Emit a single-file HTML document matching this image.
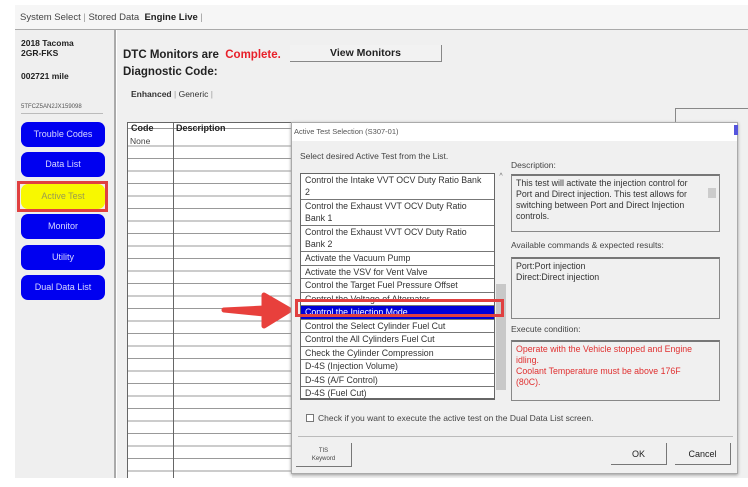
<!DOCTYPE html>
<html><head><meta charset="utf-8"><style>
*{box-sizing:border-box;margin:0;padding:0}
body{width:748px;height:487px;background:#fff;font-family:"Liberation Sans",sans-serif;position:relative;overflow:hidden;color:#222}
.a{position:absolute}
.btn{position:absolute;left:21px;width:84px;height:25px;background:#0000f0;border-radius:7px;color:#d8d8ff;font-size:9px;text-align:center;line-height:25px}
.list div{height:13.5px;border-bottom:1px solid #777;font-size:8.8px;line-height:12.5px;padding-left:4px;white-space:nowrap;color:#333;overflow:hidden}
.list div.t{height:26px;line-height:12px}
.box{position:absolute;border:1px solid #888;border-top:2px solid #777;background:#f0f0f0;font-size:8.8px;line-height:11px;padding:2px 18px 2px 4px}
</style></head><body>
<div class="a" style="left:15px;top:5px;width:733px;height:25px;border-bottom:1px solid #aaa;background:#f6f6f6"></div>
<div class="a" style="left:20px;top:12px;font-size:9.5px;color:#444">System Select <span style="color:#999">|</span> Stored Data&nbsp;&nbsp;<b style="color:#222">Engine Live</b> <span style="color:#999">|</span></div>
<div class="a" style="left:15px;top:30px;width:101px;height:448px;background:#efefef;border-right:2px solid #aaa"></div>
<div class="a" style="left:21px;top:38px;font-size:8.5px;font-weight:bold;line-height:10px">2018 Tacoma<br>2GR-FKS</div>
<div class="a" style="left:21px;top:71px;font-size:8.5px;font-weight:bold">002721 mile</div>
<div class="a" style="left:21px;top:104px;font-size:6px;color:#555;width:82px;border-bottom:1px solid #bbb;padding-bottom:3px">5TFCZ5AN2JX159098</div>
<div class="btn" style="top:122px">Trouble Codes</div>
<div class="btn" style="top:152px">Data List</div>
<div class="a" style="left:17px;top:181px;width:91px;height:31px;border:3px solid #e04040"></div>
<div class="btn" style="top:184px;background:#f8f800;color:#9a9a50">Active Test</div>
<div class="btn" style="top:214px">Monitor</div>
<div class="btn" style="top:245px">Utility</div>
<div class="btn" style="top:275px">Dual Data List</div>
<div class="a" style="left:117px;top:30px;width:631px;height:448px;background:#f0f0f0"></div>
<div class="a" style="left:123px;top:49px;font-size:11.5px;font-weight:bold">DTC Monitors are&nbsp; <span style="color:#e8202a">Complete.</span></div>
<div class="a" style="left:123px;top:66px;font-size:11.5px;font-weight:bold">Diagnostic Code:</div>
<div class="a" style="left:290px;top:45px;width:152px;height:17px;background:#f2f2f2;border-right:1px solid #888;border-bottom:1px solid #888;font-size:10.5px;font-weight:bold;text-align:center;line-height:16px">View Monitors</div>
<div class="a" style="left:131px;top:89px;font-size:8.5px;color:#333"><b>Enhanced</b> <span style="color:#999">|</span> Generic <span style="color:#999">|</span></div>
<div class="a" style="left:675px;top:108px;width:73px;height:16px;border-left:1px solid #888;border-top:1px solid #888"></div>
<div class="a" style="left:127px;top:122px;width:165px;height:356px;background:#fff;border-left:1px solid #666;border-top:1px solid #666;background-image:repeating-linear-gradient(to bottom,transparent 0 11.5px,#999 11.5px 12.5px);background-position:0 11px"></div>
<div class="a" style="left:173px;top:122px;width:1px;height:356px;background:#666"></div>
<div class="a" style="left:131px;top:123px;font-size:9px;font-weight:bold">Code</div>
<div class="a" style="left:176px;top:123px;font-size:9px;font-weight:bold">Description</div>
<div class="a" style="left:130px;top:136px;font-size:8.5px;color:#444">None</div>
<svg class="a" style="left:218px;top:290px" width="76" height="40"><path d="M6 20 L46 18 L46 5 L72 20 L46 36 L46 24 Z" fill="#e8403c" stroke="#e8403c" stroke-width="5" stroke-linejoin="round"/></svg>
<div class="a" style="left:291px;top:122px;width:447px;height:352px;background:#f0f0f0;border:1px solid #aaa;box-shadow:0 1px 3px #999"></div>
<div class="a" style="left:292px;top:123px;width:445px;height:18px;background:#fff;font-size:7.5px;color:#555;line-height:18px;padding-left:2px">Active Test Selection (S307-01)</div>
<div class="a" style="left:734px;top:125px;width:4px;height:10px;background:#5555dd"></div>
<div class="a" style="left:300px;top:151px;font-size:8.5px;color:#444">Select desired Active Test from the List.</div>
<div class="a list" style="left:300px;top:173px;width:195px;height:227px;background:#fff;border:1px solid #666;border-bottom:2px solid #666;overflow:hidden">
<div class="t">Control the Intake VVT OCV Duty Ratio Bank<br>2</div>
<div class="t">Control the Exhaust VVT OCV Duty Ratio<br>Bank 1</div>
<div class="t">Control the Exhaust VVT OCV Duty Ratio<br>Bank 2</div>
<div>Activate the Vacuum Pump</div>
<div>Activate the VSV for Vent Valve</div>
<div>Control the Target Fuel Pressure Offset</div>
<div>Control the Voltage of Alternator</div>
<div style="background:#0000d8;color:#fff">Control the Injection Mode</div>
<div>Control the Select Cylinder Fuel Cut</div>
<div>Control the All Cylinders Fuel Cut</div>
<div>Check the Cylinder Compression</div>
<div>D-4S (Injection Volume)</div>
<div>D-4S (A/F Control)</div>
<div style="border:0">D-4S (Fuel Cut)</div>
</div>
<div class="a" style="left:495px;top:173px;width:12px;height:227px;background:#f0f0f0;font-size:7px;color:#666;text-align:center">^</div>
<div class="a" style="left:496px;top:284px;width:10px;height:106px;background:#c8c8c8"></div>
<div class="a" style="left:295px;top:299px;width:209px;height:18px;border:3px solid #e04040"></div>
<div class="a" style="left:511px;top:160px;font-size:8.5px;color:#444">Description:</div>
<div class="box" style="left:511px;top:174px;width:209px;height:58px;color:#333">This test will activate the injection control for Port and Direct injection. This test allows for switching between Port and Direct Injection controls.</div>
<div class="a" style="left:708px;top:188px;width:8px;height:10px;background:#ccc"></div>
<div class="a" style="left:511px;top:240px;font-size:8.5px;color:#444">Available commands &amp; expected results:</div>
<div class="box" style="left:511px;top:257px;width:209px;height:62px;color:#333">Port:Port injection<br>Direct:Direct injection</div>
<div class="a" style="left:511px;top:324px;font-size:8.5px;color:#444">Execute condition:</div>
<div class="box" style="left:511px;top:340px;width:209px;height:61px;color:#e03030">Operate with the Vehicle stopped and Engine idling.<br>Coolant Temperature must be above 176F (80C).</div>
<div class="a" style="left:306px;top:414px;width:8px;height:8px;border:1px solid #777;background:#fff"></div>
<div class="a" style="left:318px;top:413px;font-size:8.5px;color:#444">Check if you want to execute the active test on the Dual Data List screen.</div>
<div class="a" style="left:298px;top:436px;width:435px;height:1px;background:#bbb"></div>
<div class="a" style="left:296px;top:443px;width:56px;height:24px;border-right:1px solid #777;border-bottom:1px solid #777;font-size:6px;text-align:center;line-height:8px;padding-top:4px;color:#444">TIS<br>Keyword</div>
<div class="a" style="left:611px;top:443px;width:56px;height:22px;border-right:1px solid #777;border-bottom:1px solid #777;font-size:9px;text-align:center;line-height:22px">OK</div>
<div class="a" style="left:675px;top:443px;width:56px;height:22px;border-right:1px solid #777;border-bottom:1px solid #777;font-size:9px;text-align:center;line-height:22px">Cancel</div>
</body></html>
